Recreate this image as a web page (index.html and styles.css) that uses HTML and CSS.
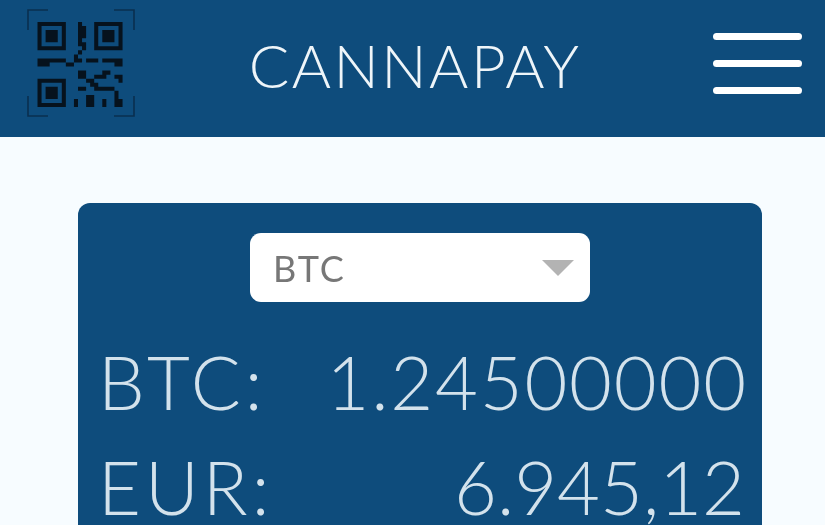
FILE: index.html
```html
<!DOCTYPE html>
<html lang="en">
<head>
    <meta charset="UTF-8">
    <title>Cannapay</title>
    <link rel="stylesheet" href="styles.css">
</head>
<body>

<header class="topbar">
    <svg class="qr" viewBox="0 0 108 108" aria-hidden="true">
        <path class="qr-frame" d="M1 21V1H21M87 1H107V21M107 87V107H87M21 107H1V87"/>
        <g transform="translate(10.5 13) scale(4.05)">
            <path class="qr-code" d="M0 0h7v7H0zM1 1v5h5V1zM2 2h3v3H2zM14 0h7v7h-7zM15 1v5h5V1zM16 2h3v3h-3zM0 14h7v7H0zM1 15v5h5v-5zM2 16h3v3H2z"/>
            <path class="qr-code" d="M10 0h1v1h1v3h-1v2h-1zM11 5h1v2h-1zM10 7h1v1h-1zM9 8h1v1H9zM0 9h4v1H3v1H0zM4 9h3v1H4zM7 10h2v1H7zM9 9h2v1H9zM12 9h3v1h-3zM16 9h5v2h-2v-1h-3zM10 12h2v2h-2zM14 13h3v1h-3zM16 12h2v1h-2zM19 13h2v2h-1v-1h-1zM12 14h2v1h-2zM13 15h2v1h-2zM10 16h2v1h-2zM14 16h5v1h-5zM19 17h1v1h-1zM9 19h1v2H9zM12 18h2v3h-2zM16 19h1v2h-1zM19 18h1v1h1v2h-2z"/>
        </g>
    </svg>
    <h1 class="brand">CANNAPAY</h1>
    <div class="menu-icon">
        <span></span>
        <span></span>
        <span></span>
    </div>
</header>

<main class="page">
    <section class="wallet">
        <div class="picker">
            <span>BTC</span>
            <i class="caret"></i>
        </div>
        <div class="row">
            <span class="label">BTC:</span>
            <span class="amount-long">1.24500000</span>
        </div>
        <div class="row">
            <span class="label">EUR:</span>
            <span>6.945,12</span>
        </div>
    </section>
</main>

</body>
</html>
```

FILE: styles.css
```css
body {
    margin: 0;
    height: 525px;
    overflow: hidden;
    font-family: Lato, "Open Sans", sans-serif;
    background-color: #f7fcff;
}
.topbar {
    height: 137px;
    box-sizing: border-box;
    padding: 9px 23px 0 27px;
    display: flex;
    justify-content: space-between;
    align-items: flex-start;
    background-color: #0e4c7c;
}
.qr, .brand, .menu-icon, .wallet {
    filter: blur(0.7px);
}
.qr {
    width: 108px;
    height: 108px;
    flex: none;
}
.qr-frame {
    fill: none;
    stroke: #0a2f4f;
    stroke-width: 1.6;
}
.qr-code {
    fill: #06121d;
    fill-rule: evenodd;
}
.brand {
    margin: 22px 18px 0 0;
    font-size: 60px;
    line-height: 68px;
    font-weight: 300;
    letter-spacing: 2.5px;
    color: #eef5f9;
}
.menu-icon {
    width: 89px;
    margin-top: 24px;
    display: flex;
    flex-direction: column;
    gap: 20px;
}
.menu-icon span {
    height: 7px;
    border-radius: 4px;
    background-color: #fff;
}
.page {
    padding: 66px 63px 0 78px;
}
.wallet {
    padding: 30px 17px 40px 20px;
    border-radius: 12px;
    background-color: #0e4c7c;
}
.picker {
    width: 340px;
    height: 69px;
    margin: 0 0 43px 152px;
    padding: 0 14px 0 23px;
    box-sizing: border-box;
    display: flex;
    justify-content: space-between;
    align-items: center;
    border-radius: 11px;
    background-color: #fff;
    color: #777;
    font-size: 36px;
    letter-spacing: 2px;
}
.caret {
    width: 0;
    height: 0;
    margin-right: 2px;
    border-left: 16px solid transparent;
    border-right: 16px solid transparent;
    border-top: 16px solid #b3b3b3;
}
.row {
    display: flex;
    justify-content: space-between;
    font-size: 74px;
    line-height: 74px;
    font-weight: 300;
    color: #d3e2ec;
}
.row + .row {
    margin-top: 31px;
}
.label {
    letter-spacing: 4px;
}
.amount-long {
    margin-right: -3px;
    letter-spacing: 1.8px;
}
```
